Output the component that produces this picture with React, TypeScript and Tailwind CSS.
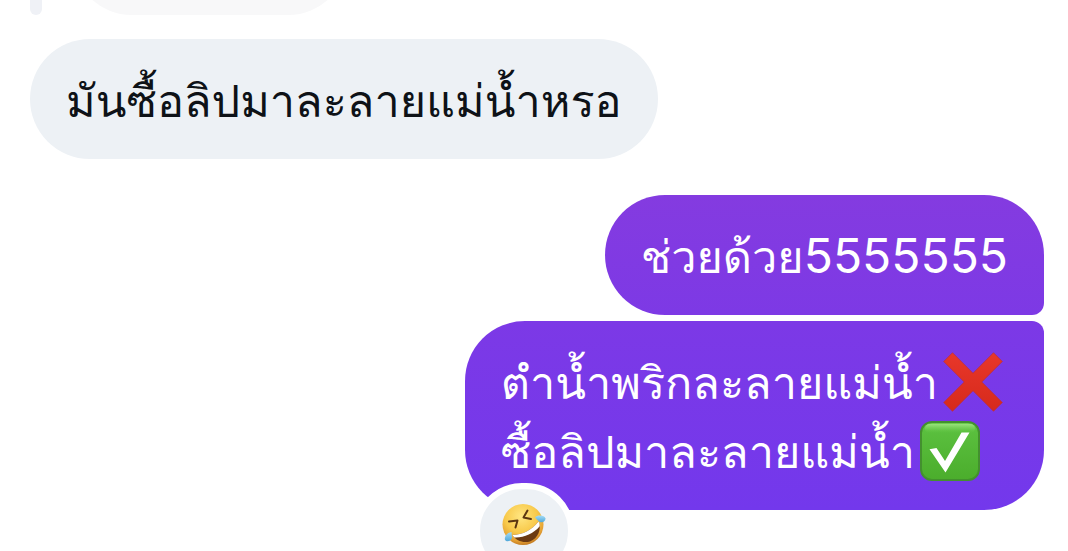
import type { ReactNode } from "react";
import clsx from "clsx";

function CrossMark() {
  return (
    <svg role="img" aria-label="❌" viewBox="0 0 60 60" className="mx-[5px] mt-px h-[60px] w-[60px] shrink-0">
      <defs>
        <linearGradient id="cross" x1="0" y1="0" x2="0" y2="1">
          <stop offset="0" stopColor="#e8372a" />
          <stop offset="1" stopColor="#d62a1b" />
        </linearGradient>
      </defs>
      <path
        d="M9.5 0.7 L30 21.2 L50.5 0.7 L59.3 9.5 L38.8 30 L59.3 50.5 L50.5 59.3 L30 38.8 L9.5 59.3 L0.7 50.5 L21.2 30 L0.7 9.5 Z"
        fill="url(#cross)"
        stroke="#b5304a"
        strokeWidth="0.8"
      />
    </svg>
  );
}

function CheckMark() {
  return (
    <svg role="img" aria-label="✅" viewBox="0 0 60 60" className="mx-[5px] mt-px h-[60px] w-[60px] shrink-0">
      <defs>
        <linearGradient id="tile" x1="0" y1="0" x2="0" y2="1">
          <stop offset="0" stopColor="#6fd04f" />
          <stop offset="0.15" stopColor="#5abf3e" />
          <stop offset="1" stopColor="#4bad2c" />
        </linearGradient>
        <linearGradient id="shine" x1="0" y1="0" x2="0" y2="1">
          <stop offset="0" stopColor="#a9e88c" stopOpacity="0.75" />
          <stop offset="1" stopColor="#6fd04f" stopOpacity="0" />
        </linearGradient>
      </defs>
      <rect x="1" y="1" width="58" height="58" rx="11" fill="url(#tile)" stroke="#43902f" strokeWidth="2" />
      <rect x="5" y="3" width="50" height="9" rx="4.5" fill="url(#shine)" />
      <path d="M9.5 28.3 L16.5 27 L25 40 L41.5 11.5 L49.5 11.5 L25.5 51.5 Z" fill="#fff" />
    </svg>
  );
}

function RollingFace() {
  return (
    <svg role="img" aria-label="🤣" viewBox="0 0 44 44" className="h-[44px] w-[44px]">
      <defs>
        <radialGradient id="face" cx="0.45" cy="0.3" r="0.72">
          <stop offset="0" stopColor="#ffe682" />
          <stop offset="0.55" stopColor="#f8c94a" />
          <stop offset="0.85" stopColor="#e39f33" />
          <stop offset="1" stopColor="#bd741f" />
        </radialGradient>
        <linearGradient id="tear" x1="0" y1="0" x2="0" y2="1">
          <stop offset="0" stopColor="#a5dcf6" />
          <stop offset="1" stopColor="#4fa8da" />
        </linearGradient>
      </defs>
      <circle cx="21" cy="21.5" r="20.5" fill="url(#face)" />
      <path d="M10.5 32 C20 32 30 27 36.500 18.500 C40 26 36 35.500 28 38.500 C21 40.500 14 37.500 10.5 32 Z" fill="#6b3a12" />
      <path d="M10.5 32 C20 32 30 27 36.500 18.500 C37.5 20.500 38 22 37.500 23.500 C31.500 30.5 21.500 35 12.500 34.500 C11.5 33.600 11 33 10.5 32 Z" fill="#fff" />
      <path d="M7 18.500 L15.5 17.500 L13.500 24.500" fill="none" stroke="#5c3711" strokeWidth="2" strokeLinejoin="round" strokeLinecap="round" />
      <path d="M25.500 7.500 L21.5 14.500 L29 16" fill="none" stroke="#5c3711" strokeWidth="2" strokeLinejoin="round" strokeLinecap="round" />
      <path d="M33 14.500 C36 11 43 12.500 43.500 15.500 C43.500 19 39 20.500 36.500 18 Z" fill="url(#tear)" />
      <path d="M9.5 29 C5.500 29.500 2 33.500 3 37 C5 39.500 9.500 38 10 34.500 Z" fill="url(#tear)" />
    </svg>
  );
}

function Bubble({ children, className }: { children: ReactNode; className?: string }) {
  return (
    <div className={clsx("relative w-fit rounded-[60px] px-9 pt-[30px] pb-[26px] whitespace-nowrap", className)}>
      {children}
    </div>
  );
}

export default function App() {
  return (
    <main className="flex h-screen flex-col overflow-hidden bg-white pr-6 pl-[30px] font-[Inter,Loma,sans-serif] text-[45px] leading-[64px]">
      {/* tail of the quoted message above */}
      <div className="flex h-[39px] shrink-0 items-start gap-[30px]">
        <div className="h-[15px] w-3 rounded-b-full bg-[#eff1f6]" />
        <div className="h-[15px] w-[276px] overflow-hidden">
          <div className="-mt-[105px] h-[120px] rounded-[60px] bg-[#f8f8f9]" />
        </div>
      </div>

      <Bubble className="bg-[#edf1f5] text-[#0e1217]">
        <p className="overflow-hidden">มันซื้อลิปมาละลายแม่น้ำหรอ</p>
      </Bubble>

      <div className="mt-9 flex flex-col items-end gap-1.5 text-white">
        <Bubble className="rounded-br-xl bg-linear-to-b from-[#843be0] to-[#7d39e5]">
          <p className="overflow-hidden">
            ช่วยด้วย<span className="text-5xl leading-none">5555555</span>
          </p>
        </Bubble>
        <Bubble className="rounded-tr-xl bg-linear-to-b from-[#7c39e6] to-[#7338ec]">
          <div className="flex flex-col gap-[5px] overflow-hidden">
            <p className="flex items-start">
              ตำน้ำพริกละลายแม่น้ำ
              <CrossMark />
            </p>
            <p className="flex items-start">
              ซื้อลิปมาละลายแม่น้ำ
              <CheckMark />
            </p>
          </div>
          <button
            type="button"
            className="absolute -bottom-[69px] left-[9px] flex h-24 items-start rounded-[48px] border-[6px] border-white bg-[#edf1f5] px-[22px] pt-3.5"
          >
            <RollingFace />
          </button>
        </Bubble>
      </div>
    </main>
  );
}
